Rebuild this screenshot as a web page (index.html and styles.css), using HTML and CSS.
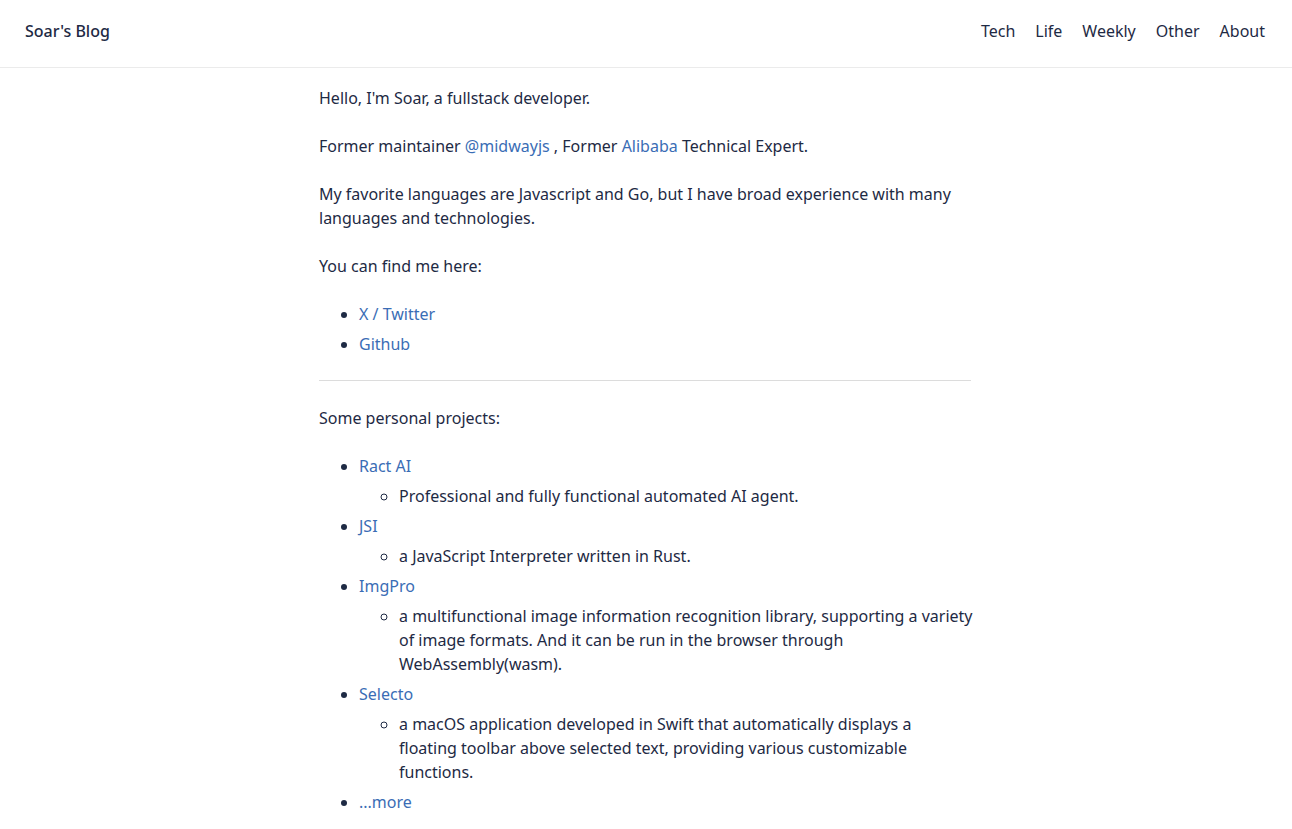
FILE: index.html
```html
<!DOCTYPE html>
<html lang="en">

<head>
    <meta charset="UTF-8">
    <meta name="viewport" content="width=device-width, initial-scale=1.0">
    <title>Soar's Blog</title>
    <link rel="stylesheet" href="styles.css">
</head>

<body>
    <header class="site-header">
        <a class="site-title" href="#">Soar's Blog</a>
        <nav class="site-nav">
            <a href="#">Tech</a>
            <a href="#">Life</a>
            <a href="#">Weekly</a>
            <a href="#">Other</a>
            <a href="#">About</a>
        </nav>
    </header>

    <main class="content">
        <p>Hello, I'm Soar, a fullstack developer.</p>
        <p>Former maintainer <a href="#">@midwayjs</a> , Former <a href="#">Alibaba</a> Technical Expert.</p>
        <p>My favorite languages are Javascript and Go, but I have broad experience with many languages and technologies.</p>
        <p>You can find me here:</p>
        <ul>
            <li><a href="#">X / Twitter</a></li>
            <li><a href="#">Github</a></li>
        </ul>
        <hr>
        <p>Some personal projects:</p>
        <ul>
            <li><a href="#">Ract AI</a>
                <ul>
                    <li>Professional and fully functional automated AI agent.</li>
                </ul>
            </li>
            <li><a href="#">JSI</a>
                <ul>
                    <li>a JavaScript Interpreter written in Rust.</li>
                </ul>
            </li>
            <li><a href="#">ImgPro</a>
                <ul>
                    <li>a multifunctional image information recognition library, supporting a variety of image formats. And it can be run in the browser through WebAssembly(wasm).</li>
                </ul>
            </li>
            <li><a href="#">Selecto</a>
                <ul>
                    <li>a macOS application developed in Swift that automatically displays a floating toolbar above selected text, providing various customizable functions.</li>
                </ul>
            </li>
            <li><a href="#">...more</a></li>
        </ul>
    </main>
</body>

</html>
```

FILE: styles.css
```css
body {
    margin: 0;
    background-color: #fff;
    color: #1e2a44;
    font-family: "Noto Sans", "Liberation Sans", sans-serif;
    font-size: 16px;
    line-height: 24px;
}

a {
    color: #3a6db5;
    text-decoration: none;
}

.site-header {
    display: flex;
    justify-content: space-between;
    align-items: center;
    height: 61px;
    padding: 0 27px 6px 25px;
    border-bottom: 1px solid #ebebeb;
}

.site-title {
    color: #1e2a44;
    font-weight: 500;
}

.site-nav {
    display: flex;
    gap: 20px;
}

.site-nav a {
    color: #1e2a44;
}

.content {
    width: 654px;
    margin: 0 auto;
    padding: 18px 0 24px;
}

.content p {
    margin: 24px 0;
}

.content p:first-child {
    margin-top: 0;
}

.content ul {
    margin: 24px 0;
    padding-left: 40px;
}

.content ul ul {
    margin: 0;
    list-style-type: circle;
}

/* every item after the first gets a little breathing room,
   nested description lines included */
.content li + li,
.content li > ul > li {
    margin-top: 6px;
}

.content hr {
    margin: 24px 2px 25px 0;
    border: 0;
    border-top: 1px solid #dcdcdc;
}
```
